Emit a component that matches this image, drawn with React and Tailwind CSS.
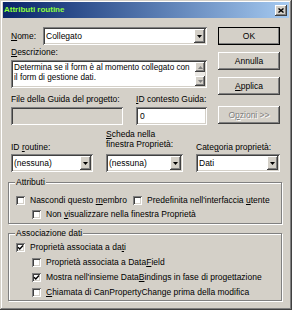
import React from 'react';

const raised =
  'shadow-[inset_-1px_-1px_#404040,inset_1px_1px_#ffffff,inset_-2px_-2px_#808080,inset_2px_2px_#d4d0c8]';
const sunken =
  'shadow-[inset_1px_1px_#808080,inset_-1px_-1px_#ffffff,inset_2px_2px_#404040,inset_-2px_-2px_#d4d0c8]';

function U({ children }) {
  return <span className="underline underline-offset-1">{children}</span>;
}

function Arrow({ down = true, color = '#000' }) {
  return (
    <svg width="5" height="3" viewBox="0 0 5 3">
      <path d={down ? 'M0 0H5L2.5 3Z' : 'M0 3H5L2.5 0Z'} fill={color} />
    </svg>
  );
}

function Combo({ value, className = '' }) {
  return (
    <div className={`h-[18px] bg-white p-[2px] flex ${sunken} ${className}`}>
      <span className="flex-1 pl-[1px] leading-[14px] whitespace-nowrap overflow-hidden">{value}</span>
      <span className={`w-[11px] bg-[#d4d0c8] flex items-center justify-center ${raised}`}>
        <Arrow />
      </span>
    </div>
  );
}

function Btn({ children, def, disabled }) {
  return (
    <div
      className={`h-[18px] flex items-center justify-center bg-[#d4d0c8] ${raised} ${
        def ? 'outline outline-1 outline-black -outline-offset-1' : ''
      } ${disabled ? 'text-[#808080] [text-shadow:1px_1px_#ffffff]' : ''}`}
    >
      {children}
    </div>
  );
}

function Check({ checked }) {
  return (
    <span className={`w-[9px] h-[9px] bg-white flex items-center justify-center shrink-0 ${sunken}`}>
      {checked && (
        <svg width="7" height="7" viewBox="0 0 7 7">
          <path d="M1 3.2L2.8 5L6 1.6" stroke="#000" strokeWidth="1.4" fill="none" />
        </svg>
      )}
    </span>
  );
}

function Row({ checked, indent, className = '', children }) {
  return (
    <div className={`flex items-center gap-[5px] ${indent ? 'pl-[16px]' : ''} ${className}`}>
      <Check checked={checked} />
      <span className="whitespace-nowrap">{children}</span>
    </div>
  );
}

function Group({ label, className = '', children }) {
  return (
    <div className={`relative border border-[#808080] shadow-[inset_1px_1px_#ffffff,1px_1px_#ffffff] ${className}`}>
      <span className="absolute left-[6px] -top-[6px] bg-[#d4d0c8] px-[1px] leading-[11px]">{label}</span>
      {children}
    </div>
  );
}

export default function App() {
  return (
    <div
      className={`w-[292px] h-[310px] bg-[#d4d0c8] p-[3px] pt-[2px] flex flex-col text-[8.5px] text-black font-['Liberation_Sans',Arial,sans-serif] shadow-[inset_-1px_-1px_#404040,inset_1px_1px_#d4d0c8,inset_-2px_-2px_#808080,inset_2px_2px_#ffffff]`}
    >
      <div className="h-[16px] flex items-center justify-between pl-[1px] pr-[2px] bg-linear-to-r from-[#0a246a] to-[#a6caf0]">
        <span className="font-bold text-[8px] text-[#8cff3c]">Attributi routine</span>
        <span className={`w-[12px] h-[11px] bg-[#d4d0c8] flex items-center justify-center ${raised}`}>
          <svg width="6" height="5" viewBox="0 0 6 5">
            <path d="M0.5 0.5L5.5 4.5M5.5 0.5L0.5 4.5" stroke="#000" strokeWidth="1.4" />
          </svg>
        </span>
      </div>

      <div className="flex flex-col pl-[5px] pr-[7px]">
        <div className="flex pl-[3px] pr-[2px] pt-[9px]">
          <div className="w-[196px] flex flex-col">
            <div className="flex items-center h-[18px]">
              <span className="w-[32px]">
                <U>N</U>ome:
              </span>
              <Combo value="Collegato" className="flex-1" />
            </div>
            <div className="mt-[2px] leading-[11px]">
              <U>D</U>escrizione:
            </div>
            <div className={`mt-[2px] h-[28px] bg-white p-[2px] flex ${sunken}`}>
              <div className="flex-1 pl-[1px] pt-[1px] text-[8.2px] leading-[10px] whitespace-nowrap overflow-hidden">
                Determina se il form è al momento collegato con
                <br />
                il form di gestione dati.
              </div>
              <div className="w-[10px] flex flex-col bg-[#ebe9e5]">
                <span className={`h-[10px] bg-[#d4d0c8] flex items-center justify-center ${raised}`}>
                  <Arrow down={false} color="#808080" />
                </span>
                <span className="flex-1" />
                <span className={`h-[10px] bg-[#d4d0c8] flex items-center justify-center ${raised}`}>
                  <Arrow color="#808080" />
                </span>
              </div>
            </div>
            <div className="flex gap-[13px] mt-[6px]">
              <div className="w-[112px] flex flex-col">
                <span className="leading-[11px] whitespace-nowrap">File della Guida del progetto:</span>
                <div className={`mt-[2px] h-[18px] bg-[#d4d0c8] ${sunken}`} />
              </div>
              <div className="flex-1 flex flex-col">
                <span className="leading-[11px] whitespace-nowrap">
                  <U>I</U>D contesto Guida:
                </span>
                <div className={`mt-[2px] h-[18px] bg-white p-[2px] pl-[4px] leading-[14px] ${sunken}`}>0</div>
              </div>
            </div>
          </div>

          <div className="w-[62px] ml-[11px] flex flex-col">
            <Btn def>OK</Btn>
            <div className="mt-[7px]">
              <Btn>Annulla</Btn>
            </div>
            <div className="mt-[7px]">
              <Btn>
                <span>
                  <U>A</U>pplica
                </span>
              </Btn>
            </div>
            <div className="mt-[11px]">
              <Btn disabled>
                <span>
                  O<U>p</U>zioni &gt;&gt;
                </span>
              </Btn>
            </div>
          </div>
        </div>

        <div className="flex items-end gap-[13px] pl-[3px] pr-[2px] mt-[4px]">
          <div className="w-[82px] flex flex-col">
            <span className="leading-[11px] mb-[1px]">
              ID <U>r</U>outine:
            </span>
            <Combo value="(nessuna)" />
          </div>
          <div className="w-[77px] flex flex-col">
            <span className="leading-[10px] mb-[5px] whitespace-nowrap">
              <U>S</U>cheda nella
              <br />
              finestra Proprietà:
            </span>
            <Combo value="(nessuna)" />
          </div>
          <div className="flex-1 flex flex-col">
            <span className="leading-[11px] mb-[1px] whitespace-nowrap">
              Cate<U>g</U>oria proprietà:
            </span>
            <Combo value="Dati" />
          </div>
        </div>

        <Group label="Attributi" className="mt-[10px] h-[42px] pt-[10px] pl-[7px]">
          <div className="flex h-[14px]">
            <Row className="w-[117px]">
              Nascondi questo <U>m</U>embro
            </Row>
            <Row>
              Predefinita nell'interfaccia <U>u</U>tente
            </Row>
          </div>
          <Row indent className="h-[14px]">
            Non <U>v</U>isualizzare nella finestra Proprietà
          </Row>
        </Group>

        <Group label="Associazione dati" className="mt-[9px] h-[68px] pt-[6px] pl-[7px]">
          <Row checked className="h-[15px]">
            Proprietà associata a da<U>t</U>i
          </Row>
          <Row indent className="h-[15px]">
            Proprietà associata a Data<U>F</U>ield
          </Row>
          <Row indent checked className="h-[15px]">
            Mostra nell'insieme Data<U>B</U>indings in fase di progettazione
          </Row>
          <Row indent className="h-[15px]">
            <U>C</U>hiamata di CanPropertyChange prima della modifica
          </Row>
        </Group>
      </div>
    </div>
  );
}
